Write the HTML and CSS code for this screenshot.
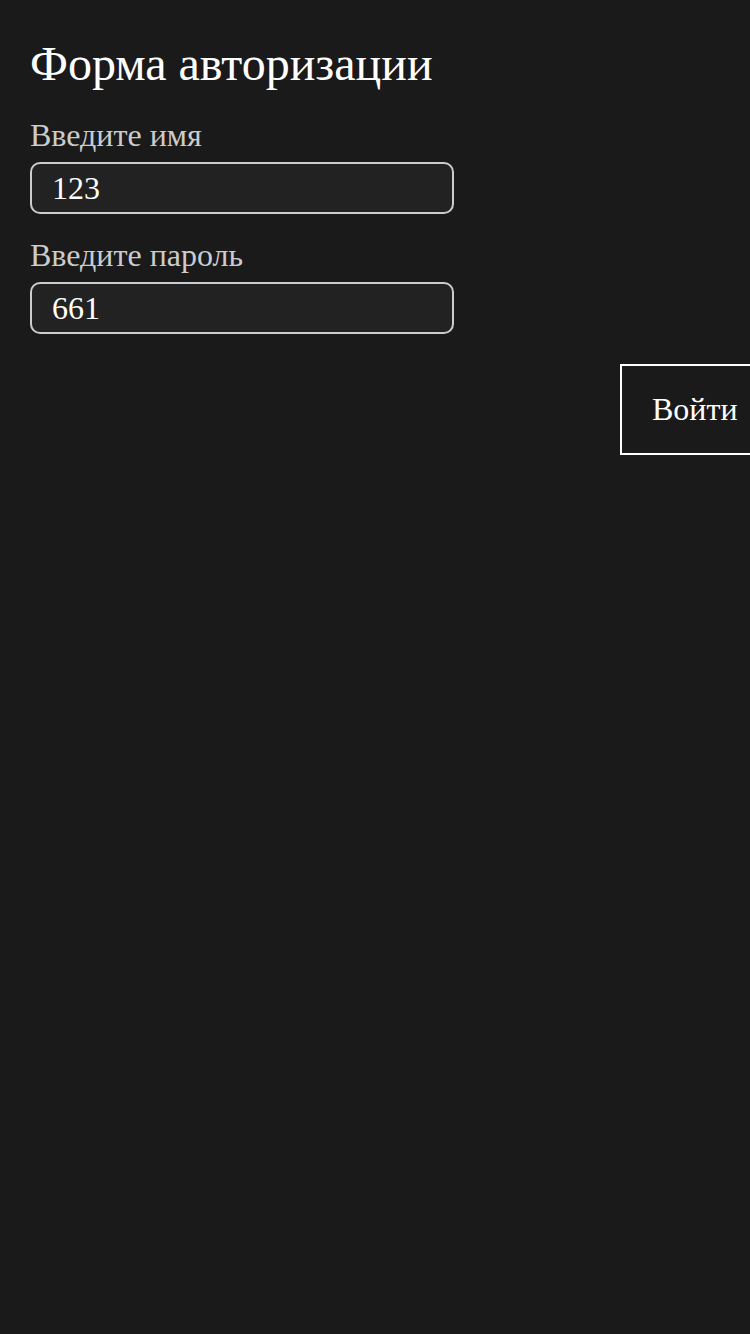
FILE: index.html
```html
<!DOCTYPE html>
<html lang="ru">
<head>
<meta charset="utf-8">
<title>Форма авторизации</title>
<link rel="stylesheet" href="styles.css">
</head>
<body>
<form class="auth">
  <h1 class="auth-title">Форма авторизации</h1>
  <label class="field">
    <span class="field-label">Введите имя</span>
    <input class="field-input" type="text" value="123">
  </label>
  <label class="field">
    <span class="field-label">Введите пароль</span>
    <input class="field-input" type="text" value="661">
  </label>
  <div class="actions">
    <button class="submit" type="button">Войти</button>
  </div>
</form>
</body>
</html>
```
FILE: styles.css
```css
html, body {
  margin: 0;
  padding: 0;
  background: #1a1a1a;
  overflow-x: hidden;
}
body {
  width: 750px;
  min-height: 1334px;
  font-family: "Liberation Serif", "Times New Roman", serif;
  color: #ffffff;
}
.auth {
  display: flex;
  flex-direction: column;
  padding: 36px 0 0 30px;
}
.auth-title {
  margin: 0 0 26px;
  font-size: 48px;
  font-weight: normal;
  color: #ffffff;
}
.field {
  display: flex;
  flex-direction: column;
  gap: 8px;
  margin-bottom: 23px;
}
.field-label {
  font-size: 32px;
  color: #cccccc;
}
.field-input {
  box-sizing: border-box;
  width: 424px;
  height: 52px;
  padding: 0 20px;
  border: 2px solid #cccccc;
  border-radius: 10px;
  background: #222222;
  color: #ffffff;
  font-family: "Liberation Serif", "Times New Roman", serif;
  font-size: 32px;
  outline: none;
}
.actions {
  display: flex;
  padding-top: 7px;
  padding-left: 590px;
}
.submit {
  flex: none;
  padding: 25px 30px;
  border: 2px solid #ffffff;
  border-radius: 0;
  background: transparent;
  color: #ffffff;
  font-family: "Liberation Serif", "Times New Roman", serif;
  font-size: 32px;
  cursor: pointer;
}
```
